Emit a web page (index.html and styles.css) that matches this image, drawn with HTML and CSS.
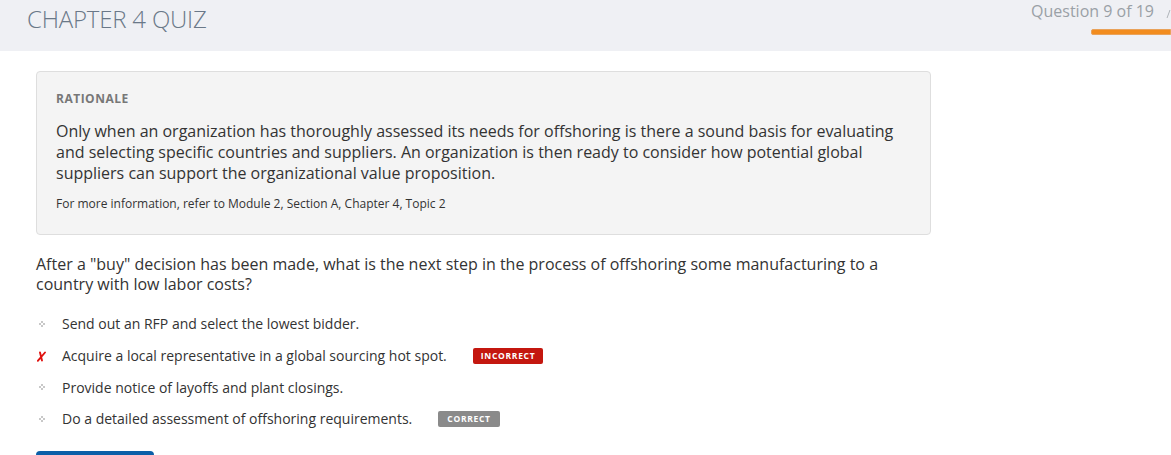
FILE: index.html
```html
<!DOCTYPE html>
<html>
<head>
<meta charset="utf-8">
<link rel="stylesheet" href="styles.css">
</head>
<body>
<header class="topbar">
  <h1 class="title">CHAPTER 4 QUIZ</h1>
  <div class="progress">
    <div class="progress-text">Question 9 of 19</div>
    <div class="progress-bar"></div>
  </div>
  <div class="edge-glyph"></div>
</header>
<main class="content">
  <section class="rationale">
    <h2 class="rationale-label">RATIONALE</h2>
    <p class="rationale-text">Only when an organization has thoroughly assessed its needs for offshoring is there a sound basis for evaluating and selecting specific countries and suppliers. An organization is then ready to consider how potential global suppliers can support the organizational value proposition.</p>
    <p class="rationale-ref">For more information, refer to Module 2, Section A, Chapter 4, Topic 2</p>
  </section>
  <p class="question">After a "buy" decision has been made, what is the next step in the process of offshoring some manufacturing to a country with low labor costs?</p>
  <ul class="options">
    <li class="option"><span class="mark"><svg class="dot" width="6" height="6" viewBox="0 0 6 6"><rect x="2" y="0" width="2" height="2" fill="#c8c8c8"/><rect x="0" y="2" width="2" height="2" fill="#c8c8c8"/><rect x="4" y="2" width="2" height="2" fill="#c8c8c8"/><rect x="2" y="4" width="2" height="2" fill="#c8c8c8"/></svg></span><span class="opt-text">Send out an RFP and select the lowest bidder.</span></li>
    <li class="option"><span class="mark"><svg class="x" width="9" height="11" viewBox="0 0 9 11"><path d="M3 1.5 L5 9.5 M8 1.5 L0.8 9.8" stroke="#e0120f" stroke-width="1.9" stroke-linecap="round" fill="none"/></svg></span><span class="opt-text">Acquire a local representative in a global sourcing hot spot.</span><span class="badge badge-incorrect">INCORRECT</span></li>
    <li class="option"><span class="mark"><svg class="dot" width="6" height="6" viewBox="0 0 6 6"><rect x="2" y="0" width="2" height="2" fill="#c8c8c8"/><rect x="0" y="2" width="2" height="2" fill="#c8c8c8"/><rect x="4" y="2" width="2" height="2" fill="#c8c8c8"/><rect x="2" y="4" width="2" height="2" fill="#c8c8c8"/></svg></span><span class="opt-text">Provide notice of layoffs and plant closings.</span></li>
    <li class="option"><span class="mark"><svg class="dot" width="6" height="6" viewBox="0 0 6 6"><rect x="2" y="0" width="2" height="2" fill="#c8c8c8"/><rect x="0" y="2" width="2" height="2" fill="#c8c8c8"/><rect x="4" y="2" width="2" height="2" fill="#c8c8c8"/><rect x="2" y="4" width="2" height="2" fill="#c8c8c8"/></svg></span><span class="opt-text">Do a detailed assessment of offshoring requirements.</span><span class="badge badge-correct">CORRECT</span></li>
  </ul>
  <div class="next-btn"></div>
</main>
</body>
</html>
```
FILE: styles.css
```css
* { box-sizing: border-box; }
html, body { margin: 0; padding: 0; overflow: hidden; }
body {
  font-family: "Open Sans", "Liberation Sans", sans-serif;
  color: #333;
  background: #fff;
  width: 1171px;
  height: 455px;
}
.topbar {
  position: relative;
  height: 51px;
  background: #eff0f4;
  display: flex;
  justify-content: space-between;
  align-items: flex-start;
  padding-left: 27px;
}
.title {
  margin: 4px 0 0;
  font-weight: 300;
  font-size: 24px;
  line-height: 30px;
  color: #6a7888;
  letter-spacing: -0.2px;
}
.progress {
  display: flex;
  flex-direction: column;
  align-items: flex-end;
}
.progress-text {
  font-size: 16px;
  line-height: 22px;
  color: #9aa0a6;
  white-space: nowrap;
  margin-right: 17px;
}
.edge-glyph {
  position: absolute;
  right: 0;
  top: 10px;
  width: 3px;
  height: 8px;
  border-left: 1px solid #b0b4b9;
  transform: skewX(-20deg);
}
.progress-bar {
  margin-top: 7px;
  width: 80px;
  height: 6px;
  background: #f28c1e;
  border-radius: 2px 0 0 2px;
  border: 1px solid #e9a25a;
}
.content {
  padding: 20px 0 0 36px;
  width: 931px;
}
.rationale {
  background: #f4f4f4;
  border: 1px solid #dedede;
  border-radius: 4px;
  padding: 19px 19px 18px;
  height: 164px;
}
.rationale-label {
  margin: 0;
  font-size: 12px;
  font-weight: 700;
  line-height: 16px;
  color: #777;
  letter-spacing: 0.5px;
}
.rationale-text {
  margin: 14px 0 0;
  font-size: 16px;
  line-height: 21px;
  color: #333;
}
.rationale-ref {
  margin: 12px 0 0;
  font-size: 12px;
  line-height: 16px;
  color: #333;
}
.question {
  margin: 19px 0 0;
  font-size: 16px;
  line-height: 20px;
  color: #333;
}
.options {
  list-style: none;
  margin: 14px 0 0;
  padding: 0;
}
.option {
  display: flex;
  align-items: center;
  height: 31.7px;
  font-size: 14px;
}
.mark {
  width: 26px;
  flex: none;
  display: flex;
  align-items: center;
}
.dot { margin-left: 3px; }
.x { margin-left: 1px; margin-top: 1px; }
.opt-text { color: #333; }
.badge {
  display: inline-block;
  font-size: 8.5px;
  font-weight: 700;
  letter-spacing: 0.7px;
  color: #fff;
  height: 16px;
  line-height: 16px;
  padding: 0 8px;
  border-radius: 2px;
  margin-left: 26px;
}
.badge-incorrect { background: #c4170f; }
.badge-correct { background: #8a8a8a; padding: 0 9px; }
.next-btn {
  margin-top: 16px;
  width: 118px;
  height: 20px;
  background: #0b5fa8;
  border-radius: 4px 4px 0 0;
}
```
